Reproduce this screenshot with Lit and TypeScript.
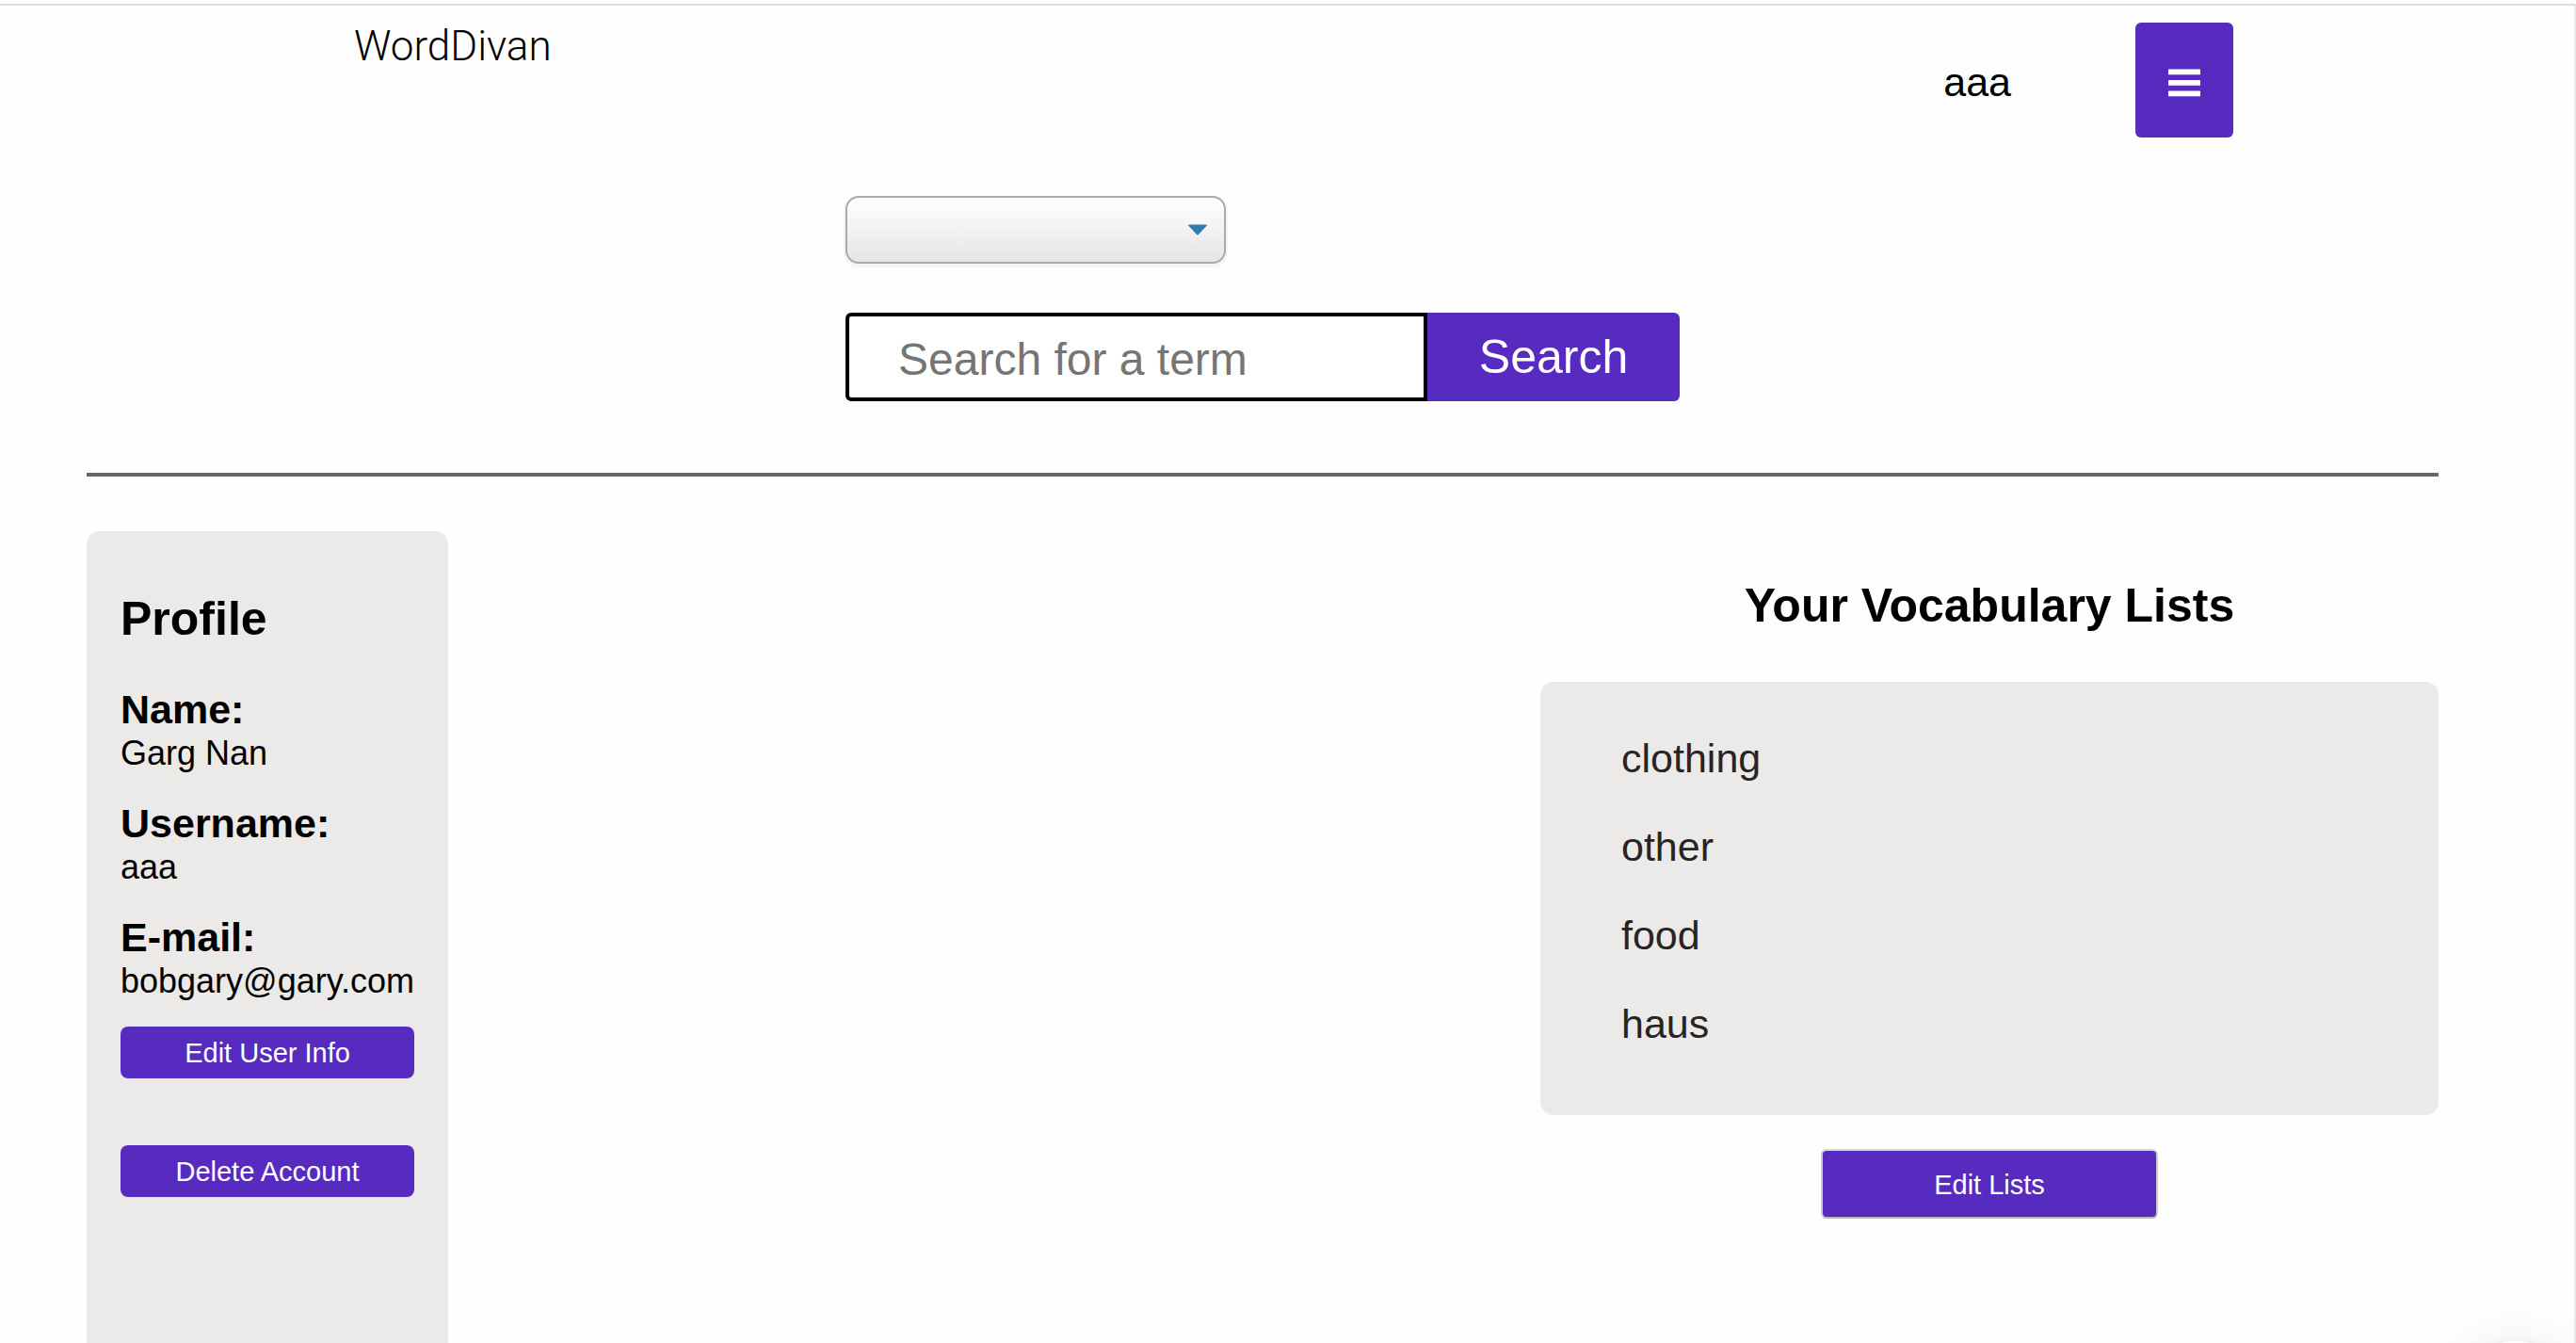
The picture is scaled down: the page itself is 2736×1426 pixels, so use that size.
import { LitElement, html, css } from "lit";
import { customElement, property, state } from "lit/decorators.js";

const base = css`
  :host {
    display: block;
    font-family: "Liberation Sans", Arial, Helvetica, sans-serif;
    color: #000;
  }
  *,
  *::before,
  *::after {
    box-sizing: border-box;
  }
  h1, h2, h3, p, dl, dd, ul {
    margin: 0;
    padding: 0;
  }
  button, input, select {
    font-family: inherit;
    margin: 0;
  }
  button {
    border: 0;
    background: #572bc0;
    color: #fff;
    cursor: pointer;
  }
`;

@customElement("site-header")
class SiteHeader extends LitElement {
  @property() user = "";

  static styles = [
    base,
    css`
      .bar {
        display: flex;
        justify-content: space-between;
        align-items: flex-start;
      }
      .brand {
        font-family: Roboto, "Liberation Sans", sans-serif;
        font-size: 44px;
        font-weight: 300;
        line-height: 50px;
        color: #000;
        text-decoration: none;
      }
      .account {
        display: flex;
        align-items: center;
        gap: 132px;
        font-size: 43px;
        line-height: 50px;
      }
      .user {
        padding-top: 4px;
      }
      .menu {
        display: grid;
        place-items: center;
        width: 104px;
        height: 122px;
        padding: 6px 0 0;
        border-radius: 6px;
      }
      .icon {
        display: block;
        width: 34px;
        height: 30px;
      }
    `,
  ];

  render() {
    return html`
      <header class="bar">
        <a class="brand" href="#">WordDivan</a>
        <div class="account">
          <span class="user">${this.user}</span>
          <button class="menu" type="button" aria-label="Menu">
            <svg class="icon" viewBox="0 0 34 30" fill="#fff" aria-hidden="true">
              <rect x="0" y="0.5" width="34" height="5.8" rx="0.5" />
              <rect x="0" y="12" width="34" height="5.8" rx="0.5" />
              <rect x="0" y="23.5" width="34" height="5.8" rx="0.5" />
            </svg>
          </button>
        </div>
      </header>
    `;
  }
}

@customElement("term-search")
class TermSearch extends LitElement {
  @state() private term = "";

  static styles = [
    base,
    css`
      .form {
        display: flex;
        flex-direction: column;
        align-items: flex-start;
        gap: 52px;
        max-width: 886px;
        margin: 0 auto;
      }
      .picker {
        display: grid;
        align-items: center;
        width: 404px;
      }
      .select,
      .arrow {
        grid-area: 1 / 1;
      }
      .select {
        appearance: none;
        width: 100%;
        height: 72px;
        padding: 0 56px 0 24px;
        border: 2px solid #aaa;
        border-radius: 14px;
        background: linear-gradient(to bottom, #fff 0%, #e5e5e5 100%);
        box-shadow: 0 2px 0 2px rgba(0, 0, 0, 0.04);
        font-size: 32px;
      }
      .arrow {
        justify-self: end;
        width: 20px;
        height: 12px;
        margin-right: 20px;
        pointer-events: none;
      }
      .row {
        display: flex;
        width: 100%;
      }
      .field {
        flex: 1;
        min-width: 0;
        height: 94px;
        padding: 4px 52px 0;
        border: 4px solid #000;
        border-radius: 6px 0 0 6px;
        background: #fff;
        font-size: 48px;
      }
      .field::placeholder {
        color: #757575;
        opacity: 1;
      }
      .submit {
        width: 268px;
        padding: 0;
        border-radius: 0 6px 6px 0;
        font-size: 50px;
      }
    `,
  ];

  render() {
    return html`
      <form class="form" @submit=${(e: Event) => e.preventDefault()}>
        <div class="picker">
          <select class="select" aria-label="Language">
            <option></option>
          </select>
          <svg class="arrow" viewBox="0 0 20 12" aria-hidden="true">
            <path
              d="M0.8 0.5H19.2C20 0.5 20.2 1.2 19.6 1.8L10.9 11Q10 11.9 9.1 11L0.4 1.8C-0.2 1.2 0 0.5 0.8 0.5Z"
              fill="#327bb0"
            />
          </svg>
        </div>
        <div class="row">
          <input
            class="field"
            type="text"
            aria-label="Search for a term"
            placeholder="Search for a term"
            .value=${this.term}
            @input=${(e: Event) => (this.term = (e.target as HTMLInputElement).value)}
          />
          <button class="submit" type="submit">Search</button>
        </div>
      </form>
    `;
  }
}

interface Detail {
  label: string;
  value: string;
}

@customElement("profile-card")
class ProfileCard extends LitElement {
  @property({ attribute: false }) details: Detail[] = [];

  static styles = [
    base,
    css`
      :host {
        display: flex;
      }
      .card {
        flex: 1;
        min-width: 0;
        padding: 64px 36px;
        border-radius: 14px 14px 0 0;
        background: #ebeae8;
      }
      .title {
        font-size: 50px;
        line-height: 58px;
      }
      .details {
        display: flex;
        flex-direction: column;
        gap: 27px;
        margin: 42px 0 26px;
      }
      .label {
        font-size: 43px;
        font-weight: 700;
        line-height: 50px;
      }
      .value {
        font-size: 36px;
        line-height: 44px;
        white-space: nowrap;
      }
      .actions {
        display: flex;
        flex-direction: column;
        gap: 71px;
      }
      .action {
        height: 55px;
        padding: 2px 0 0;
        border-radius: 8px;
        font-size: 29px;
      }
    `,
  ];

  render() {
    return html`
      <aside class="card">
        <h2 class="title">Profile</h2>
        <dl class="details">
          ${this.details.map(
            (d) => html`
              <div>
                <dt class="label">${d.label}</dt>
                <dd class="value">${d.value}</dd>
              </div>
            `
          )}
        </dl>
        <div class="actions">
          <button class="action" type="button">Edit User Info</button>
          <button class="action" type="button">Delete Account</button>
        </div>
      </aside>
    `;
  }
}

@customElement("vocabulary-lists")
class VocabularyLists extends LitElement {
  @property({ attribute: false }) lists: string[] = [];

  static styles = [
    base,
    css`
      .section {
        display: flex;
        flex-direction: column;
        align-items: center;
        padding: 50px 0;
      }
      .title {
        font-size: 50px;
        line-height: 58px;
      }
      .lists {
        display: flex;
        flex-direction: column;
        align-items: flex-start;
        gap: 44px;
        width: 100%;
        margin: 52px 0 36px;
        padding: 56px 86px 72px;
        border-radius: 14px;
        background: #ebeae8;
        list-style: none;
      }
      .link {
        display: block;
        color: #2a2323;
        font-size: 43px;
        line-height: 50px;
        text-decoration: none;
      }
      .edit {
        width: 358px;
        height: 74px;
        padding: 2px 0 0;
        border: 2px solid;
        border-color: #d5d7d2 #c9c9c9 #b8b6ba;
        border-radius: 6px;
        font-size: 29px;
      }
    `,
  ];

  render() {
    return html`
      <section class="section">
        <h2 class="title">Your Vocabulary Lists</h2>
        <ul class="lists">
          ${this.lists.map((name) => html`<li><a class="link" href="#">${name}</a></li>`)}
        </ul>
        <button class="edit" type="button">Edit Lists</button>
      </section>
    `;
  }
}

@customElement("app-root")
class AppRoot extends LitElement {
  private details: Detail[] = [
    { label: "Name:", value: "Garg Nan" },
    { label: "Username:", value: "aaa" },
    { label: "E-mail:", value: "bobgary@gary.com" },
  ];
  private lists = ["clothing", "other", "food", "haus"];

  static styles = [
    base,
    css`
      :host {
        box-sizing: border-box;
        min-height: 100vh;
        padding-top: 4px;
        display: flex;
        flex-direction: column;
        background: #fff;
      }
      .page {
        flex: 1;
        display: flex;
        flex-direction: column;
        padding: 18px 144px 0 92px;
        border-top: 2px solid #dedee2;
        border-right: 2px solid #e8e8e8;
        background: #fefefe;
      }
      .header {
        padding: 0 218px 0 284px;
      }
      .search {
        margin: 62px 0 76px;
      }
      .rule {
        width: 100%;
        height: 4px;
        margin: 0 0 58px;
        border: 0;
        background: #666;
      }
      .columns {
        flex: 1;
        display: grid;
        grid-template-columns: 384px 1160fr 954fr;
      }
      .lists {
        grid-column: 3;
      }
      .launcher {
        position: fixed;
        right: 0;
        bottom: -126px;
        width: 128px;
        height: 128px;
        border: 0;
        border-radius: 50%;
        background: #fff;
        box-shadow: 0 2px 12px rgba(0, 0, 0, 0.08), 0 4px 64px rgba(0, 0, 0, 0.08);
      }
    `,
  ];

  render() {
    return html`
      <div class="page">
        <site-header class="header" user="aaa"></site-header>
        <term-search class="search"></term-search>
        <hr class="rule" />
        <main class="columns">
          <profile-card .details=${this.details}></profile-card>
          <vocabulary-lists class="lists" .lists=${this.lists}></vocabulary-lists>
        </main>
      </div>
      <button class="launcher" type="button" aria-label="Help"></button>
    `;
  }
}
